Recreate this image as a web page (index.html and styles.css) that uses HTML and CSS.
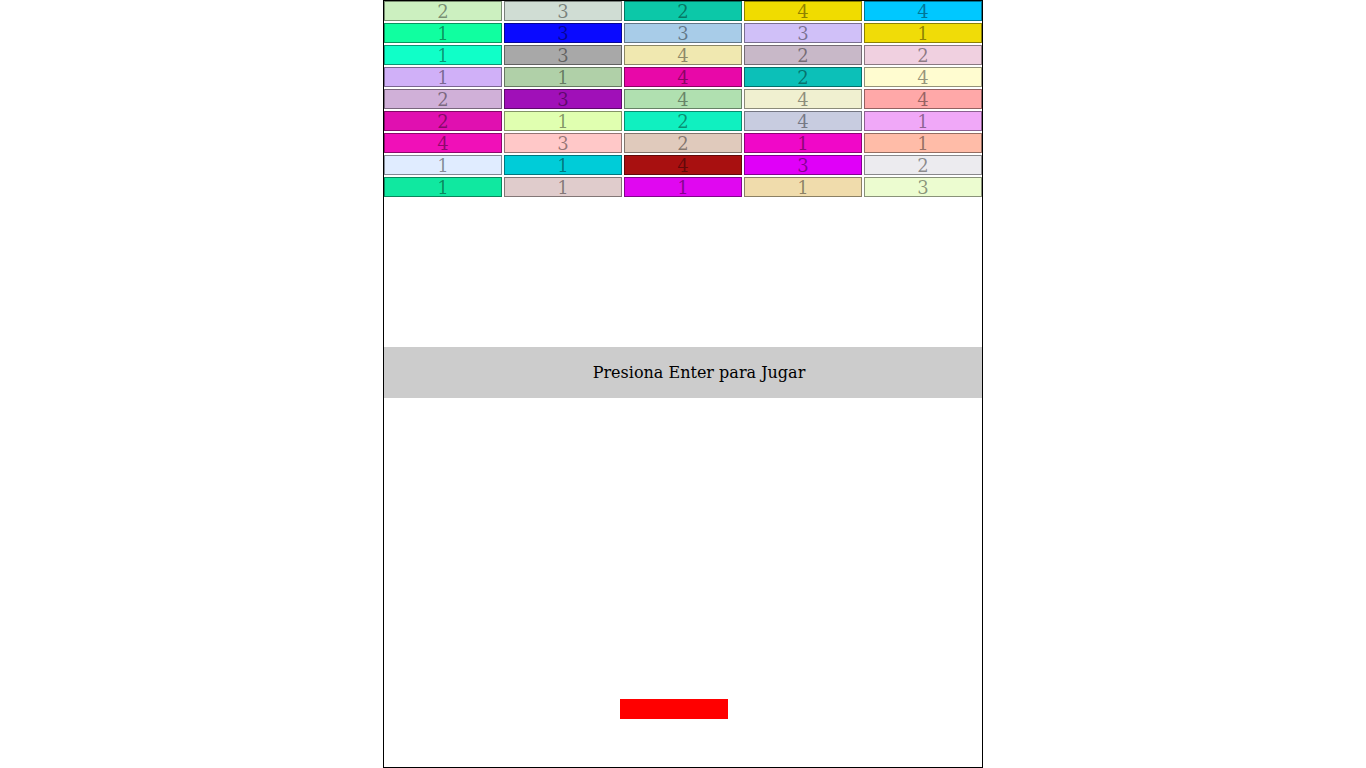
FILE: index.html
```html
<!DOCTYPE html>
<html lang="es">
<head>
<meta charset="utf-8">
<title>Breakout</title>
<link rel="stylesheet" href="styles.css">
</head>
<body>
<div class="game">
  <div class="bricks">
    <div class="brick" style="background:#ccf0c0">2</div>
    <div class="brick" style="background:#d0ddd4">3</div>
    <div class="brick" style="background:#0cc8a8">2</div>
    <div class="brick" style="background:#f0dc00">4</div>
    <div class="brick" style="background:#00c8ff">4</div>

    <div class="brick" style="background:#10ffa0">1</div>
    <div class="brick" style="background:#0a0aff">3</div>
    <div class="brick" style="background:#a8cce8">3</div>
    <div class="brick" style="background:#d0c0f8">3</div>
    <div class="brick" style="background:#f0dc08">1</div>

    <div class="brick" style="background:#10ffc8">1</div>
    <div class="brick" style="background:#a8a8a8">3</div>
    <div class="brick" style="background:#f0e8b0">4</div>
    <div class="brick" style="background:#c8b8c8">2</div>
    <div class="brick" style="background:#f0d0e0">2</div>

    <div class="brick" style="background:#d0b0f8">1</div>
    <div class="brick" style="background:#b0d0a8">1</div>
    <div class="brick" style="background:#e808a8">4</div>
    <div class="brick" style="background:#0cc0b8">2</div>
    <div class="brick" style="background:#fffcd0">4</div>

    <div class="brick" style="background:#d0b0d8">2</div>
    <div class="brick" style="background:#a010b8">3</div>
    <div class="brick" style="background:#b0e0b0">4</div>
    <div class="brick" style="background:#f0f0d0">4</div>
    <div class="brick" style="background:#ffa8a8">4</div>

    <div class="brick" style="background:#e010b0">2</div>
    <div class="brick" style="background:#e0ffb0">1</div>
    <div class="brick" style="background:#10f0c0">2</div>
    <div class="brick" style="background:#c8cce0">4</div>
    <div class="brick" style="background:#f0a8f8">1</div>

    <div class="brick" style="background:#f010b8">4</div>
    <div class="brick" style="background:#ffc8c8">3</div>
    <div class="brick" style="background:#e0cabc">2</div>
    <div class="brick" style="background:#f008c8">1</div>
    <div class="brick" style="background:#ffbca8">1</div>

    <div class="brick" style="background:#e0ecff">1</div>
    <div class="brick" style="background:#00ccd8">1</div>
    <div class="brick" style="background:#a81010">4</div>
    <div class="brick" style="background:#e000f8">3</div>
    <div class="brick" style="background:#ecebef">2</div>

    <div class="brick" style="background:#10e8a0">1</div>
    <div class="brick" style="background:#e0cccc">1</div>
    <div class="brick" style="background:#e008f0">1</div>
    <div class="brick" style="background:#f0dcac">1</div>
    <div class="brick" style="background:#ecfcd0">3</div>
  </div>
  <div class="message">Presiona Enter para Jugar</div>
  <div class="paddle"></div>
</div>
</body>
</html>
```

FILE: styles.css
```css
html, body {
  margin: 0;
  padding: 0;
  background: #fff;
}

body {
  font-family: "DejaVu Serif", serif;
  font-size: 16px;
}

.game {
  position: relative;
  width: 598px;
  height: 766px;
  margin: 0 auto;
  border: 1px solid #000;
  overflow: hidden;
}

.bricks {
  display: grid;
  grid-template-columns: repeat(5, 118px);
  grid-auto-rows: 20px;
  gap: 2px;
}

.brick {
  box-sizing: border-box;
  border: 1px solid rgba(0, 0, 0, 0.42);
  color: rgba(0, 0, 0, 0.42);
  font-size: 18px;
  line-height: 19px;
  text-align: center;
}

.message {
  position: absolute;
  left: 0;
  right: 0;
  top: 346px;
  height: 51px;
  line-height: 51px;
  background: #ccc;
  color: #000;
  text-align: center;
  padding-left: 32px;
}

.paddle {
  position: absolute;
  left: 236px;
  top: 698px;
  width: 108px;
  height: 20px;
  background: #f00;
}
```
